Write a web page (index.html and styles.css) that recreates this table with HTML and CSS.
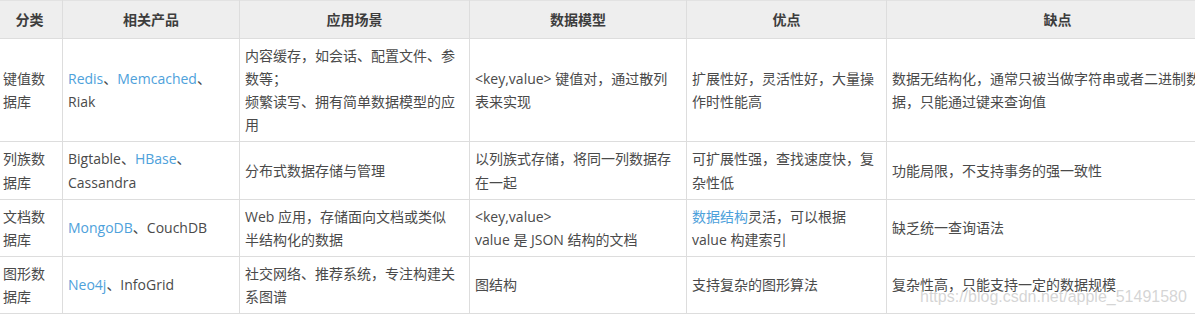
FILE: index.html
```html
<!DOCTYPE html>
<html lang="zh-CN">
<head>
<meta charset="utf-8">
<title>NoSQL 数据库分类</title>
<link rel="stylesheet" href="styles.css">
</head>
<body>
<div class="page">
  <table class="nosql">
    <colgroup>
      <col class="c1"><col class="c2"><col class="c3"><col class="c4"><col class="c5"><col class="c6">
    </colgroup>
    <thead>
      <tr>
        <th>分类</th>
        <th>相关产品</th>
        <th>应用场景</th>
        <th>数据模型</th>
        <th>优点</th>
        <th>缺点</th>
      </tr>
    </thead>
    <tbody>
      <tr>
        <td>键值数据库</td>
        <td><a class="lnk">Redis</a>、<a class="lnk">Memcached</a>、Riak</td>
        <td>内容缓存，如会话、配置文件、参数等；<br>频繁读写、拥有简单数据模型的应用</td>
        <td>&lt;key,value&gt; 键值对，通过散列表来实现</td>
        <td>扩展性好，灵活性好，大量操作时性能高</td>
        <td>数据无结构化，通常只被当做字符串或者二进制数据，只能通过键来查询值</td>
      </tr>
      <tr>
        <td>列族数据库</td>
        <td>Bigtable、<a class="lnk">HBase</a>、Cassandra</td>
        <td>分布式数据存储与管理</td>
        <td>以列族式存储，将同一列数据存在一起</td>
        <td>可扩展性强，查找速度快，复杂性低</td>
        <td>功能局限，不支持事务的强一致性</td>
      </tr>
      <tr>
        <td>文档数据库</td>
        <td><a class="lnk">MongoDB</a>、CouchDB</td>
        <td>Web 应用，存储面向文档或类似<br>半结构化的数据</td>
        <td>&lt;key,value&gt;<br>value 是 JSON 结构的文档</td>
        <td><a class="lnk">数据结构</a>灵活，可以根据 value 构建索引</td>
        <td>缺乏统一查询语法</td>
      </tr>
      <tr>
        <td>图形数据库</td>
        <td><a class="lnk">Neo4j</a>、InfoGrid</td>
        <td>社交网络、推荐系统，专注构建关系图谱</td>
        <td>图结构</td>
        <td>支持复杂的图形算法</td>
        <td>复杂性高，只能支持一定的数据规模</td>
      </tr>
    </tbody>
  </table>
  <div class="watermark">https://blog.csdn.net/apple_51491580</div>
</div>
</body>
</html>
```

FILE: styles.css
```css
html, body {
  margin: 0;
  padding: 0;
  background: #ffffff;
}

body {
  overflow: hidden;
}

.page {
  position: relative;
  width: 1195px;
  height: 315px;
  overflow: hidden;
}

.nosql {
  border-collapse: collapse;
  table-layout: fixed;
  width: 1232px;
  margin-left: -4px;
  font-family: "Open Sans", "Noto Sans CJK SC", sans-serif;
  font-size: 14px;
  line-height: 23.1px;
  color: #4a4a4a;
}

.c1 { width: 66px; }
.c2 { width: 177px; }
.c3 { width: 230px; }
.c4 { width: 217px; }
.c5 { width: 200px; }
.c6 { width: 342px; }

.nosql th,
.nosql td {
  border: 1px solid #dddddd;
  padding: 5px 5px;
  vertical-align: middle;
  text-align: left;
}

.nosql thead th {
  background: #eeeeee;
  font-weight: bold;
  color: #3d3d3d;
  text-align: center;
  padding: 7px 5px 7px;
  border-top-color: #e2e2e2;
}

.nosql tbody td:first-child {
  padding-left: 6px;
}

.lnk {
  color: #4ea1db;
  text-decoration: none;
}

.watermark {
  position: absolute;
  left: 920px;
  top: 287px;
  font-family: "Liberation Sans", Arial, sans-serif;
  font-size: 16px;
  line-height: 20px;
  color: rgba(195, 195, 195, 0.7);
  white-space: nowrap;
}
```
